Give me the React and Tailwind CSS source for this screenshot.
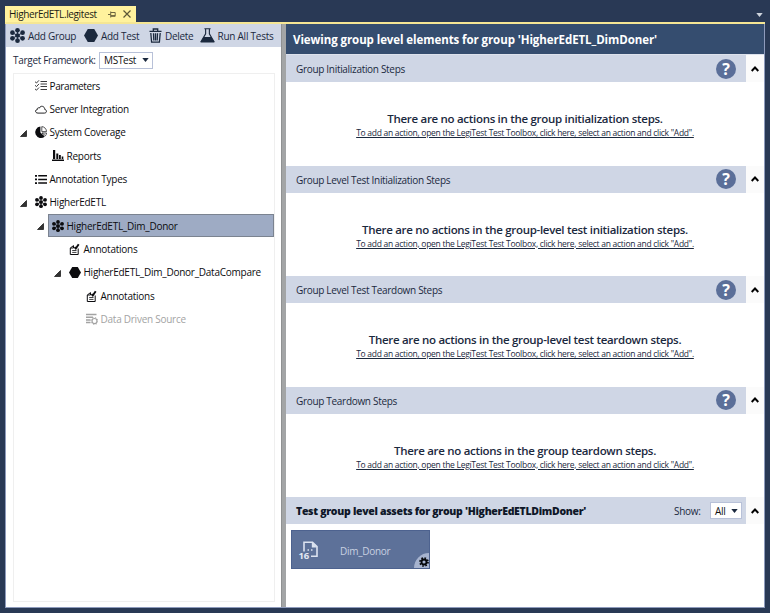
import React from "react";

const Caret = ({ className = "" }) => (
  <svg viewBox="0 0 8 5" className={`h-[4px] w-[7px] shrink-0 fill-current ${className}`}>
    <path d="M0 0h8L4 5z" />
  </svg>
);

const Group = ({ className = "h-3 w-3" }) => (
  <svg viewBox="0 0 16 16" className={`shrink-0 fill-current ${className}`}>
    <path d="M8 3v10M3.5 5.5l9 5M12.5 5.5l-9 5" stroke="currentColor" strokeWidth="1" />
    <circle cx="8" cy="8" r="2.5" />
    <circle cx="8" cy="2.5" r="2.5" />
    <circle cx="8" cy="13.5" r="2.5" />
    <circle cx="2.6" cy="5" r="2.5" />
    <circle cx="13.4" cy="5" r="2.5" />
    <circle cx="2.6" cy="11" r="2.5" />
    <circle cx="13.4" cy="11" r="2.5" />
  </svg>
);

const Hexagon = ({ className = "h-[11px] w-3" }) => (
  <svg viewBox="0 0 16 14" preserveAspectRatio="none" className={`shrink-0 fill-current ${className}`}>
    <path d="M4.3 0h7.4L16 7l-4.3 7H4.3L0 7z" />
  </svg>
);

const Trash = () => (
  <svg viewBox="0 0 13 15" className="h-[15px] w-[13px] shrink-0" fill="none" stroke="currentColor" strokeWidth="1.3">
    <path d="M.5 3.4h12M4.3 3V1h4.4v2M1.8 5l.8 9.2h7.8l.8-9.2M4.5 5.2l.3 7.3M6.5 5.2v7.3M8.5 5.2l-.3 7.3" />
  </svg>
);

const Flask = () => (
  <svg viewBox="0 0 16 16" className="h-[15px] w-[15px] shrink-0">
    <path d="M4.7.8h6.6M6 1v5.2L1.2 14.4h13.6L10 6.200V1" fill="none" stroke="currentColor" strokeWidth="1.2" />
    <path d="M4 9.5h8l3.5 6H.5z" fill="currentColor" />
  </svg>
);

const Checklist = () => (
  <svg viewBox="0 0 12 11" className="h-[11px] w-3" fill="none" stroke="currentColor">
    <path d="M0 1.700l1.500 1.300L4 .3M0 5.300l1.500 1.300L4 3.900M0 8.900l1.500 1.300L4 7.500" strokeWidth=".8" />
    <path d="M5.500 1.500H12M5.500 4h6.500M5.500 6.500H12M5.500 9.500H12" strokeWidth=".8" />
  </svg>
);

const Cloud = () => (
  <svg viewBox="0 0 12 9" className="h-[9px] w-3" fill="none" stroke="currentColor" strokeWidth=".9">
    <path d="M3 8.100h6.400c2.600 0 2.700-3.300.4-3.600C9.800 1 5.400.1 4.500 3 2.900 2.400 2 3.300 2.300 4.600-.2 4.700-.1 8.100 3 8.100z" />
  </svg>
);

const Pie = () => (
  <svg viewBox="0 0 12 12" className="h-3 w-3 overflow-visible">
    <path d="M5.400.6v6l4.400 3.800A5.700 5.700 0 1 1 5.400.6z" fill="currentColor" />
    <path d="M6.800.6v5h4.700A5 5 0 0 0 6.800.6zM7 7h4.500c0 1-.4 1.900-1 2.700z" fill="none" stroke="currentColor" strokeWidth=".7" />
  </svg>
);

const Bars = () => (
  <svg viewBox="0 0 12 11" className="h-[11px] w-3 fill-current">
    <path d="M0 9.500h12V11H0zM1 0h2.200v9H1zM4.300 3.500h2V9h-2zM7 5h1.800v4H7zM9.700 6.500h1.600V9H9.700z" />
  </svg>
);

const List = () => (
  <svg viewBox="0 0 12 9" className="h-[9px] w-3 fill-current">
    <path d="M0 0h2v1.700H0zM3.200 0H12v1.500H3.200zM0 3.600h2v1.700H0zM3.200 3.700H12v1.500H3.200zM0 7.200h2v1.700H0zM3.200 7.300H12v1.500H3.200z" />
  </svg>
);

const Note = () => (
  <svg viewBox="0 0 12 12" className="h-3 w-3" fill="none" stroke="currentColor">
    <path d="M4.500 2.600L1.300 5v6.500h7.900V5.500M4.500 2.600V5H1.500" strokeWidth="1" />
    <path d="M5.500 4.200l1.300 1.300L9.700 1.200" strokeWidth="1.900" />
    <path d="M3.200 7.500h4.300M3.200 9.400h4.300" strokeWidth=".8" />
  </svg>
);

const SourceIcon = () => (
  <svg viewBox="0 0 12 12" className="h-3 w-3" fill="none" stroke="currentColor">
    <path d="M0 1.500h10.500M0 4.200h7M0 6.900h4.500M0 9.600h4.500" strokeWidth="1.500" />
    <circle cx="8.500" cy="8" r="2.500" strokeWidth="1.200" />
    <circle cx="8.500" cy="8" r="3.500" strokeWidth=".9" strokeDasharray="1.300 1.450" />
  </svg>
);

const Gear = () => (
  <svg viewBox="0 0 12 12" className="h-[10px] w-[10px] shrink-0" fill="none" stroke="#05070b">
    <circle cx="6" cy="6" r="3" strokeWidth="2.200" />
    <circle cx="6" cy="6" r="4.800" strokeWidth="2" strokeDasharray="1.900 1.870" />
  </svg>
);

const FileIcon = () => (
  <svg viewBox="0 0 22 24" className="h-6 w-[22px] shrink-0">
    <path d="M6 12.500V3.200h8.500l4.500 4.500v9.600h-6" fill="none" stroke="#dce3f0" strokeWidth="1.600" />
    <path d="M13.800 3v5.500H19z" fill="#dce3f0" />
    <path d="M9.500 10.200H11v1.500H9.500zM13 10.200h1.500v1.500H13z" fill="#dce3f0" />
    <text x="0.500" y="20" fontSize="9.500" fontWeight="700" fill="#e3e8f3" fontFamily="Open Sans, sans-serif">16</text>
  </svg>
);

const Pin = () => (
  <svg viewBox="0 0 8 7" className="h-[7px] w-2 shrink-0" fill="none" stroke="#5c5736">
    <path d="M0 3.500h2.500M2.700.5v6M3 1.500h4.200v3.800H3M3 4.600h4" strokeWidth=".9" />
  </svg>
);

const tree = [
  { label: "Parameters", icon: Checklist, pad: "pl-[6px]", tracking: "tracking-[-0.38px]" },
  { label: "Server Integration", icon: Cloud, pad: "pl-[6px]" },
  { label: "System Coverage", icon: Pie, pad: "pl-[6px]", open: true },
  { label: "Reports", icon: Bars, pad: "pl-[23px]" },
  { label: "Annotation Types", icon: List, pad: "pl-[6px]" },
  { label: "HigherEdETL", icon: Group, pad: "pl-[6px]", open: true },
  { label: "HigherEdETL_Dim_Donor", icon: Group, pad: "pl-[23px]", open: true, selected: true },
  { label: "Annotations", icon: Note, pad: "pl-[40px]" },
  { label: "HigherEdETL_Dim_Donor_DataCompare", icon: Hexagon, pad: "pl-[40px]", open: true },
  { label: "Annotations", icon: Note, pad: "pl-[57px]" },
  { label: "Data Driven Source", icon: SourceIcon, pad: "pl-[57px]", disabled: true },
];

function TreeRow({ row }) {
  const Icon = row.icon;
  return (
    <div className={`flex h-[23.35px] items-center ${row.pad}`}>
      <div className="w-[11px] shrink-0">
        {row.open && (
          <svg viewBox="0 0 7 7" className="mt-[2px] h-[7px] w-[7px]">
            <path d="M6.500.5v6h-6z" fill="#333" stroke="#111" strokeWidth=".7" />
          </svg>
        )}
      </div>
      <div
        className={`flex h-[23px] items-center gap-[2.500px] border pl-[3px] whitespace-nowrap ${
          row.selected ? "flex-1 border-[#7b8390] bg-[#9eabc4]" : "border-transparent"
        } ${row.disabled ? "text-[#a3a3a3]" : "text-[#0c0c0f]"}`}
      >
        <Icon />
        <span className={row.tracking || "tracking-[-0.25px]"}>{row.label}</span>
      </div>
    </div>
  );
}

const Up = () => (
  <div className="flex w-[18px] items-center justify-center bg-[#fbfbfb]">
    <svg viewBox="0 0 8 6" className="h-[6px] w-2" fill="none" stroke="#000" strokeWidth="1.900">
      <path d="M.7 5L4 1.500 7.300 5" />
    </svg>
  </div>
);

const steps = [
  { title: "Group Initialization Steps", message: "There are no actions in the group initialization steps." },
  { title: "Group Level Test Initialization Steps", message: "There are no actions in the group-level test initialization steps." },
  { title: "Group Level Test Teardown Steps", message: "There are no actions in the group-level test teardown steps." },
  { title: "Group Teardown Steps", message: "There are no actions in the group teardown steps." },
];

function StepSection({ title, message }) {
  return (
    <section className="h-[110.500px]">
      <div className="flex h-[27px]">
        <div className="flex flex-1 items-center justify-between bg-[#cfd6e5] pr-[10px] pl-[10px]">
          <span className="pt-px tracking-[-0.31px]">{title}</span>
          <span className="flex h-5 w-5 items-center justify-center rounded-full bg-[#5b6f99] text-[16px] font-bold text-white">?</span>
        </div>
        <Up />
      </div>
      <div className="flex flex-col items-center pt-[29px] whitespace-nowrap">
        <p className="h-4 text-[11.500px] leading-4 font-semibold tracking-[-0.3px]">{message}</p>
        <p className="h-[11px] text-[8.500px] leading-[11px] tracking-[-0.28px] underline underline-offset-1">
          To add an action, open the LegiTest Test Toolbox, click here, select an action and click "Add".
        </p>
      </div>
    </section>
  );
}

export default function App() {
  return (
    <div className="flex h-[613px] w-[770px] flex-col overflow-hidden bg-[#293955] pr-[5px] pb-[5px] pl-[5px] font-['Open_Sans','Noto_Sans',sans-serif] text-[10px] leading-none tracking-[-0.3px] text-[#1b293e]">
      <div className="flex h-[22px] items-end justify-between">
        <div className="flex h-4 w-[131px] items-center bg-[#fff29d] pl-1 whitespace-nowrap text-[#1b1b14]">
          <span className="w-[99px] shrink-0 tracking-[-0.38px]">HigherEdETL.legitest</span>
          <Pin />
          <svg viewBox="0 0 8 8" className="ml-[7px] h-2 w-2 shrink-0" stroke="#5c5736" strokeWidth="1.200">
            <path d="M.5.5l7 7M7.500.5l-7 7" />
          </svg>
        </div>
        <Caret className="mr-[2px] mb-[5px] text-[#ced4dd]" />
      </div>
      <div className="h-[2px] bg-[#f5e694]" />
      <div className="flex min-h-0 flex-1 border-r border-b border-l border-[#8e9bbc] bg-white">
        <aside className="flex w-[275px] flex-col whitespace-nowrap">
          <div className="flex h-[23px] items-center bg-[#cfd6e5] pl-1">
            <div className="flex w-[74px] shrink-0 items-center gap-[3px]">
              <Group className="h-[15px] w-[15px]" />
              <span>Add Group</span>
            </div>
            <div className="flex w-[65px] shrink-0 items-center gap-[3px]">
              <Hexagon className="h-[13px] w-[14px]" />
              <span>Add Test</span>
            </div>
            <div className="flex w-[51px] shrink-0 items-center gap-[3px]">
              <Trash />
              <span>Delete</span>
            </div>
            <div className="flex items-center gap-[2.500px]">
              <Flask />
              <span className="tracking-[-0.25px]">Run All Tests</span>
            </div>
          </div>
          <div className="flex h-[26px] items-center pl-[7px]">
            <span className="w-[86px] shrink-0">Target Framework:</span>
            <div className="flex h-[17px] w-[54px] shrink-0 items-center justify-between border border-[#b8c1d8] pr-[3px] pl-1">
              <span className="text-[#111]">MSTest</span>
              <Caret />
            </div>
          </div>
          <div className="mr-[6px] mb-[5px] ml-[7px] flex-1 border border-[#efefef]">
            {tree.map((row, i) => (
              <TreeRow key={i} row={row} />
            ))}
          </div>
        </aside>
        <div className="w-[5px] border-l border-[#8f9192] bg-[#a3a5a6]" />
        <main className="min-w-0 flex-1">
          <h1 className="flex h-[30px] items-center bg-[#354d6f] pt-[2px] pl-[7px] text-[11.500px] font-bold tracking-[-0.08px] text-white">
            Viewing group level elements for group 'HigherEdETL_DimDoner'
          </h1>
          <div className="h-px bg-[#dde2ec]" />
          {steps.map((s) => (
            <StepSection key={s.title} {...s} />
          ))}
          <div className="flex h-[27px]">
            <div className="flex flex-1 items-center bg-[#cfd6e5] pr-1 pl-[10px]">
              <h2 className="flex-1 pt-px text-[10.500px] font-extrabold tracking-[-0.3px] text-[#0e1728]">
                Test group level assets for group 'HigherEdETLDimDoner'
              </h2>
              <span className="w-[36px] pt-px">Show:</span>
              <div className="flex h-[17px] w-8 items-center justify-between border border-[#b8c1d8] bg-white pr-[3px] pl-1">
                <span className="text-[#111]">All</span>
                <Caret />
              </div>
            </div>
            <Up />
          </div>
          <div className="relative mt-[6px] ml-[5px] flex h-[39px] w-[139px] items-center overflow-hidden border border-[#4d628f] bg-[#5d7199] pt-[3px] pl-[6px] text-[#c8d0e1]">
            <FileIcon />
            <span className="ml-5">Dim_Donor</span>
            <div className="absolute right-0 bottom-0 flex h-[15px] w-[15px] items-center justify-center rounded-tl-[15px] bg-[#a6b3cf] pt-[2px] pl-[4px]">
              <Gear />
            </div>
          </div>
        </main>
      </div>
    </div>
  );
}
